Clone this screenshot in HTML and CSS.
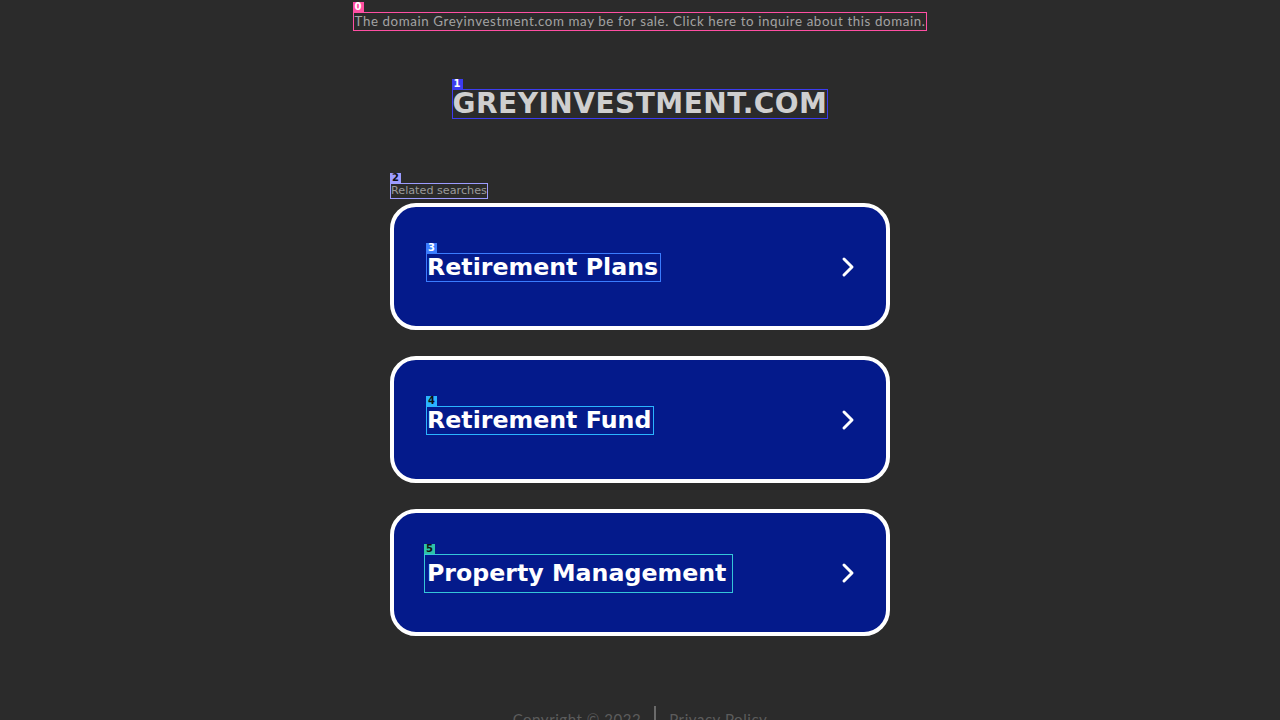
FILE: index.html
```html
<!DOCTYPE html>
<html lang="en">
<head>
<meta charset="utf-8">
<title>greyinvestment.com</title>
<link rel="stylesheet" href="styles.css">
</head>
<body>
<div class="page">
  <div class="banner mark mark-pink"><span class="badge badge-pink">0</span>The domain Greyinvestment.com may be for sale. Click here to inquire about this domain.</div>
  <h1 class="title mark mark-blue"><span class="badge badge-blue">1</span>GREYINVESTMENT.COM</h1>
  <div class="related">
    <div class="related-label mark mark-lav"><span class="badge badge-lav">2</span>Related searches</div>
    <a class="card" href="#">
      <span class="card-text mark mark-sky"><span class="badge badge-sky">3</span>Retirement Plans</span>
      <svg class="chev" width="16" height="22" viewBox="0 0 16 22"><polyline points="4,3 12,11 4,19" fill="none" stroke="#fff" stroke-width="3" stroke-linecap="round" stroke-linejoin="round"/></svg>
    </a>
    <a class="card" href="#">
      <span class="card-text mark mark-cyan"><span class="badge badge-cyan">4</span>Retirement Fund</span>
      <svg class="chev" width="16" height="22" viewBox="0 0 16 22"><polyline points="4,3 12,11 4,19" fill="none" stroke="#fff" stroke-width="3" stroke-linecap="round" stroke-linejoin="round"/></svg>
    </a>
    <a class="card" href="#">
      <span class="card-text card-text-wide mark mark-teal"><span class="badge badge-teal">5</span>Property Management</span>
      <svg class="chev" width="16" height="22" viewBox="0 0 16 22"><polyline points="4,3 12,11 4,19" fill="none" stroke="#fff" stroke-width="3" stroke-linecap="round" stroke-linejoin="round"/></svg>
    </a>
  </div>
  <div class="footer">
    <span>Copyright © 2022</span>
    <span class="sep"></span>
    <span>Privacy Policy</span>
  </div>
</div>
</body>
</html>
```
FILE: styles.css
```css
html, body {
  margin: 0;
  padding: 0;
  background: #2b2b2b;
  height: 100%;
  overflow: hidden;
}
.page {
  display: flex;
  flex-direction: column;
  align-items: center;
  font-family: "DejaVu Sans", sans-serif;
}
.mark { position: relative; }
.badge {
  position: absolute;
  left: -1px;
  top: -11px;
  font-family: "DejaVu Sans", sans-serif;
  font-weight: bold;
  font-size: 10px;
  line-height: 10px;
  height: 10px;
  padding: 0 2px;
  color: #fff;
}
.mark-pink { outline: 1px solid #ff4fa3; }
.badge-pink { background: #ff4fa3; }
.mark-blue { outline: 1px solid #3c3cf0; }
.badge-blue { background: #3c3cf0; }
.mark-lav { outline: 1px solid #9c9cff; }
.badge-lav { background: #9c9cff; color: #111; }
.mark-sky { outline: 1px solid #3a7cff; }
.badge-sky { background: #3a7cff; }
.mark-cyan { outline: 1px solid #2ab4ff; }
.badge-cyan { background: #2ab4ff; color: #111; }
.mark-teal { outline: 1px solid #35c5d8; }
.badge-teal { background: #2ec4a8; color: #111; }

.banner {
  margin-top: 13px;
  font-family: "Lato", "Open Sans", sans-serif;
  font-size: 13.3px;
  line-height: 17px;
  color: #a3a3a3;
  padding: 0 1px;
  letter-spacing: 0.6px;
}
.title {
  margin: 60px 0 0;
  font-family: "DejaVu Sans", sans-serif;
  font-weight: bold;
  font-size: 28px;
  line-height: 28px;
  color: #cfcfcf;
  letter-spacing: 0.5px;
}
.related {
  margin-top: 66px;
  width: 500px;
  display: flex;
  flex-direction: column;
  gap: 26px;
}
.related-label {
  align-self: flex-start;
  margin-left: 1px;
  font-size: 11.2px;
  line-height: 14px;
  color: #9a9a9a;
  margin-bottom: -21px;
}
.card {
  box-sizing: border-box;
  height: 127px;
  border: 4px solid #ffffff;
  border-radius: 26px;
  background: #041a8b;
  display: flex;
  align-items: center;
  justify-content: space-between;
  padding: 2px 30px 0 33px;
  text-decoration: none;
}
.card-text {
  font-weight: bold;
  font-size: 23.7px;
  line-height: 27px;
  color: #ffffff;
  padding-right: 2px;
}
.card-text-wide {
  padding: 5px 6px 5px 2px;
  margin-left: -2px;
}
.chev { display: block; margin-top: -2px; }
.footer {
  margin-top: 73px;
  display: flex;
  align-items: flex-start;
  gap: 13px;
  font-family: "Lato", "Open Sans", sans-serif;
  font-size: 15px;
  line-height: 20px;
  letter-spacing: 0.55px;
  color: #5c5c5c;
}
.sep {
  width: 2px;
  height: 22px;
  margin-top: -3px;
  background: #6a6a6a;
}
```
